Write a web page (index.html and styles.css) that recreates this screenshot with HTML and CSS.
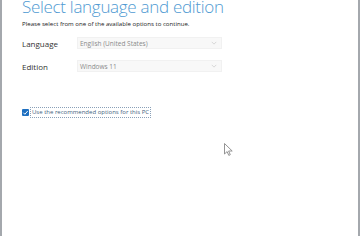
FILE: index.html
```html
<!DOCTYPE html>
<html lang="en">
<head>
  <meta charset="UTF-8" />
  <title>Select language and edition</title>
  <link rel="stylesheet" href="styles.css">
</head>
<body>
  <div class="window">
    <h1 class="title">Select language and edition</h1>
    <p class="hint">Please select from one of the available options to continue.</p>
    <div class="fields">
      <div class="row">
        <span class="label">Language</span>
        <div class="select">English (United States)<svg class="chev" viewBox="0 0 8 5" width="6" height="4"><path d="M1 1l3 3 3-3" fill="none" stroke="#ccc" stroke-width="1"/></svg></div>
      </div>
      <div class="row">
        <span class="label">Edition</span>
        <div class="select">Windows 11<svg class="chev" viewBox="0 0 8 5" width="6" height="4"><path d="M1 1l3 3 3-3" fill="none" stroke="#ccc" stroke-width="1"/></svg></div>
      </div>
    </div>
    <label class="check">
      <span class="box"><svg viewBox="0 0 8 8" width="7" height="7"><path d="M1.5 4.2l1.8 1.8 3.3-3.8" fill="none" stroke="#fff" stroke-width="1.1"/></svg></span>
      <span class="check-text">Use the recommended options for this PC</span>
    </label>
    <svg class="cursor" viewBox="0 0 9 13" width="9" height="13"><path d="M0.5 0.5v10.5l2.6-2.4 1.7 3.8 1.5-0.7-1.7-3.7h3.6z" fill="#fff" stroke="#888" stroke-width="0.9"/></svg>
  </div>
</body>
</html>
```

FILE: styles.css
```css
body{
  margin:0;background:#fff;overflow:hidden;
  font-family:"Open Sans","Noto Sans",sans-serif;
}
.window{
  position:relative;height:240px;box-sizing:border-box;
  border-left:2px solid #a4a8ad;border-right:2px solid #a4a8ad;
  padding-left:20px;
}
.title{
  margin:-4px 0 0;font-size:17px;font-weight:300;color:#4f9ad2;
  letter-spacing:-0.3px;line-height:21px;white-space:nowrap;
}
.hint{margin:2px 0 0;font-size:6.1px;color:#222;line-height:9px;}
.fields{display:flex;flex-direction:column;gap:11px;margin-top:9px;}
.row{display:flex;align-items:center;}
.label{width:55px;font-size:8px;color:#333;}
.select{
  width:145px;height:12px;box-sizing:border-box;
  display:flex;align-items:center;justify-content:space-between;
  padding:0 4px 0 2px;background:#f8f8f8;border:1px solid #f1f1f1;
  font-size:6.5px;color:#8a8a8a;
}
.check{display:flex;align-items:center;gap:2px;margin-top:36px;}
.box{
  width:7px;height:7px;background:#1e6fc0;border-radius:1px;
  display:flex;align-items:center;justify-content:center;
}
.check-text{
  font-size:6px;color:#3f5f80;outline:1px dotted #8aa0b8;
  padding:0 1px;line-height:9px;
}
.cursor{position:absolute;left:222px;top:147px;}
```
